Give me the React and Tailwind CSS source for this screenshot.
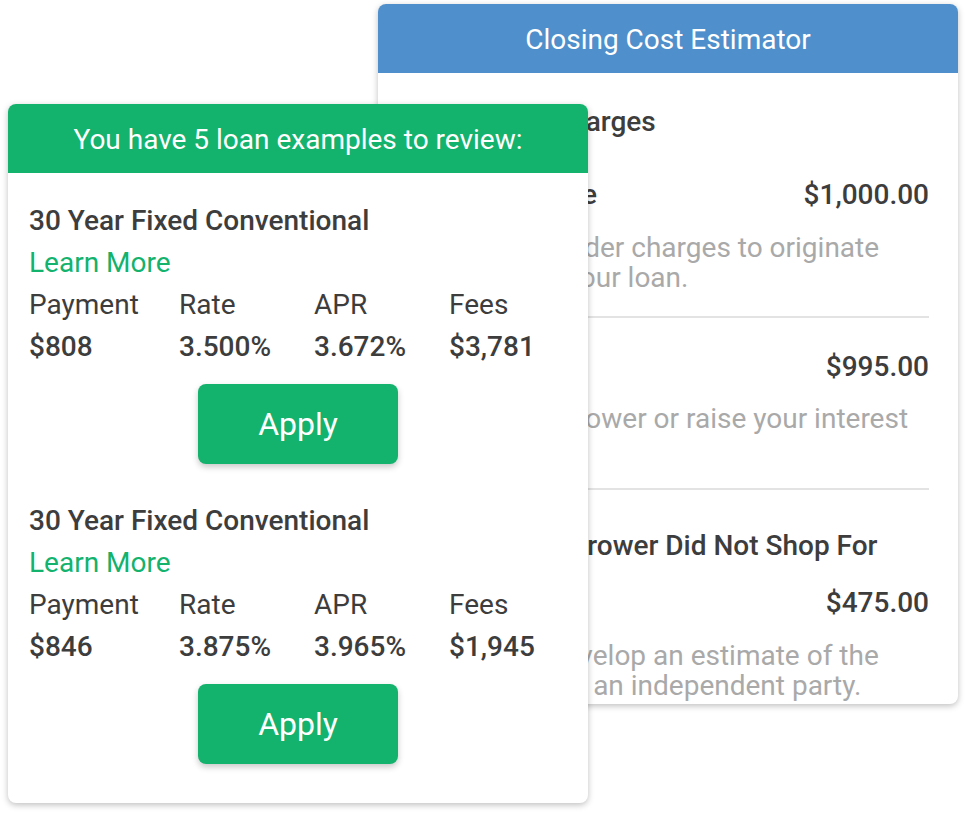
import React from "react";

const GREEN = "bg-[#13b26d]";

function LoanBlock({ payment, rate, apr, fees, className = "" }) {
  return (
    <div className={className}>
      <div className="text-[28px] leading-[42px] font-medium text-[#3d3d3d]">30 Year Fixed Conventional</div>
      <div className="text-[28px] leading-[42px] text-[#13b26d]">Learn More</div>
      <div className="grid grid-cols-[150px_135px_135px_1fr] text-[28px] leading-[42px] text-[#3d3d3d]">
        <div>Payment</div>
        <div>Rate</div>
        <div>APR</div>
        <div>Fees</div>
        <div className="font-medium">{payment}</div>
        <div className="font-medium">{rate}</div>
        <div className="font-medium">{apr}</div>
        <div className="font-medium">{fees}</div>
      </div>
      <div className="flex justify-center mt-[16px]">
        <button className={`w-[200px] h-[80px] rounded-lg ${GREEN} text-white text-[32px] shadow-[0_3px_6px_rgba(0,0,0,0.22)]`}>
          Apply
        </button>
      </div>
    </div>
  );
}

export default function App() {
  return (
    <div className="relative w-[966px] h-[816px] bg-white overflow-hidden font-['Roboto',sans-serif]">
      {/* Back card */}
      <div className="ml-[378px] mt-[4px] w-[580px] bg-white rounded-lg shadow-[0_2px_6px_rgba(0,0,0,0.25)]">
        <div className="h-[69px] pt-[3px] bg-[#4f8fcb] rounded-t-lg flex items-center justify-center text-white text-[28px]">
          Closing Cost Estimator
        </div>
        <div className="px-[29px] pb-[3px]">
          <div className="mt-[31px] text-[28px] leading-[36px] font-medium text-[#3d3d3d]">Origination Charges</div>
          <div className="mt-[37px] flex justify-between text-[28px] leading-[36px] font-medium text-[#3d3d3d]">
            <span>Origination Fee</span>
            <span>$1,000.00</span>
          </div>
          <div className="mt-[20px] text-[28px] leading-[30px] text-[#a9a9a9]">
            Costs your lender charges to originate
            <br />
            and process your loan.
          </div>
          <div className="mt-[23px] h-[2px] bg-[#e3e3e3]" />
          <div className="mt-[31px] flex justify-between text-[28px] leading-[36px] font-medium text-[#3d3d3d]">
            <span>Points</span>
            <span>$995.00</span>
          </div>
          <div className="mt-[19px] text-[28px] leading-[30px] text-[#a9a9a9]">
            Costs paid to lower or raise your interest
            <br />
            rate.
          </div>
          <div className="mt-[24px] h-[2px] bg-[#e3e3e3]" />
          <div className="mt-[38px] text-[28px] leading-[36px] font-medium text-[#3d3d3d]">I. Services Borrower Did Not Shop For</div>
          <div className="mt-[21px] flex justify-between text-[28px] leading-[36px] font-medium text-[#3d3d3d]">
            <span>Appraisal</span>
            <span>$475.00</span>
          </div>
          <div className="mt-[20px] text-[28px] leading-[30px] text-[#a9a9a9]">
            Charges to develop an estimate of the
            <br />
            home value by an independent party.
          </div>
        </div>
      </div>

      {/* Front card */}
      <div className="absolute left-[8px] top-[104px] w-[580px] bg-white rounded-lg shadow-[0_2px_6px_rgba(0,0,0,0.25)]">
        <div className={`h-[69px] pt-[3px] ${GREEN} rounded-t-lg flex items-center justify-center text-white text-[28px]`}>
          You have 5 loan examples to review:
        </div>
        <div className="pt-[27px] px-[21px] pb-[39px]">
          <LoanBlock payment="$808" rate="3.500%" apr="3.672%" fees="$3,781" />
          <LoanBlock payment="$846" rate="3.875%" apr="3.965%" fees="$1,945" className="mt-[36px]" />
        </div>
      </div>
    </div>
  );
}
